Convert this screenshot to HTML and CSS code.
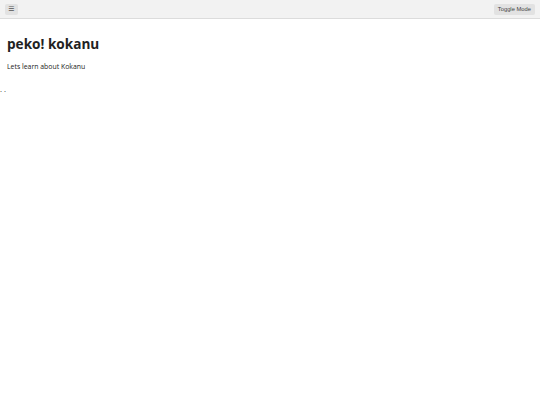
FILE: index.html
```html
<!DOCTYPE html>
<html>
<head>
<meta charset="utf-8">
<link rel="stylesheet" href="styles.css">
</head>
<body>
<header class="topbar">
  <button class="menu-btn">&#9776;</button>
  <button class="mode-btn">Toggle Mode</button>
</header>
<main class="content">
  <h1 class="title">peko! kokanu</h1>
  <p class="lead">Lets learn about Kokanu</p>
</main>
<div class="dots">. .</div>
</body>
</html>
```
FILE: styles.css
```css
html, body {
  margin: 0;
  padding: 0;
  background: #fff;
  font-family: "Open Sans", sans-serif;
  color: #222;
}
.topbar {
  height: 18px;
  background: #f2f2f2;
  border-bottom: 1px solid #dcdcdc;
  display: flex;
  align-items: center;
  justify-content: space-between;
  padding: 0 5px;
}
.menu-btn {
  width: 13px;
  height: 11px;
  padding: 0;
  border: none;
  border-radius: 2px;
  background: #e2e2e2;
  color: #555;
  font-size: 7px;
  line-height: 11px;
  font-family: "DejaVu Sans", sans-serif;
}
.mode-btn {
  height: 11px;
  padding: 0 4px;
  border: none;
  border-radius: 2px;
  background: #e2e2e2;
  color: #444;
  font-family: "Liberation Sans", sans-serif;
  font-size: 5.8px;
  line-height: 11px;
}
.content {
  padding: 0 7px;
}
.title {
  margin: 15px 0 0;
  font-size: 13.6px;
  line-height: 19px;
  font-weight: 700;
}
.lead {
  margin: 9px 0 0;
  font-size: 6.9px;
  line-height: 9px;
}
.dots {
  margin-top: 14px;
  font-size: 7.5px;
  line-height: 8px;
  color: #333;
}
```
